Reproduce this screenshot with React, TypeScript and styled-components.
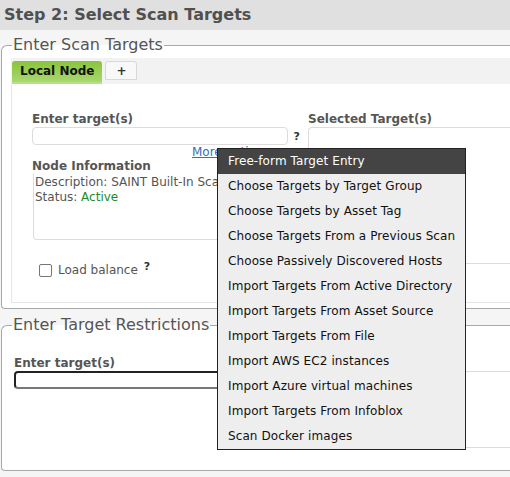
import React from "react";
import styled, { createGlobalStyle } from "styled-components";

const GlobalStyle = createGlobalStyle`
  html, body {
    margin: 0;
    padding: 0;
    background: #f5f5f5;
    overflow: hidden;
  }
  body {
    font-family: "DejaVu Sans", Verdana, sans-serif;
    font-size: 12px;
    color: #555;
  }
`;

const Page = styled.div`
  position: relative;
  width: 560px;
  height: 477px;
`;

const Header = styled.div`
  height: 30px;
  line-height: 30px;
  background: #e0e0e0;
  padding-left: 4px;
  font-size: 16px;
  font-weight: bold;
  color: #505050;
`;

const Fieldset = styled.fieldset<{ $top: number; $height: number }>`
  margin: ${(p) => p.$top}px 0 0 1px;
  padding: 3px 0 4px 9px;
  border: 1px solid #a8a8a8;
  border-radius: 6px 0 0 4px;
  border-right: none;
  height: ${(p) => p.$height}px;
  box-sizing: border-box;
  background: #fff;
`;

const Legend = styled.legend`
  padding: 0 1px;
  margin-left: 1px;
  font-size: 16px;
  line-height: 20px;
  color: #555;
`;

const TabBar = styled.div`
  display: flex;
  align-items: flex-start;
  gap: 3px;
  height: 26px;
  padding: 3px 0 0 1px;
  box-sizing: border-box;
  background: #f2f2f2;
`;

const Tab = styled.div<{ $active?: boolean }>`
  height: ${(p) => (p.$active ? 23 : 19)}px;
  line-height: ${(p) => (p.$active ? 21 : 18)}px;
  padding: 0 ${(p) => (p.$active ? 8 : 10)}px;
  font-size: 12px;
  font-weight: bold;
  box-sizing: border-box;
  border-radius: 3px 3px 0 0;
  ${(p) =>
    p.$active
      ? `
    color: #111;
    background: linear-gradient(#88c43a, #a9d770);
    border-bottom: 2px solid #b7e08a;
  `
      : `
    color: #333;
    background: #f8f8f8;
    border: 1px solid #d8d8d8;
  `}
`;

const Panel = styled.div`
  height: 219px;
  box-sizing: border-box;
  padding: 28px 0 0 20px;
  background: #fff;
  border-left: 1px solid #e6e6e6;
  border-bottom: 1px solid #e6e6e6;
`;

const Columns = styled.div<{ $gap: number }>`
  display: flex;
  gap: ${(p) => p.$gap}px;
`;

const LeftColumn = styled.div`
  display: flex;
  flex-direction: column;
  width: 268px;
`;

const RightColumn = styled.div`
  display: flex;
  flex-direction: column;
  flex: 1;
`;

const Label = styled.div`
  font-size: 12px;
  font-weight: bold;
  color: #555;
  line-height: 14px;
  margin-bottom: 1px;
`;

const InputRow = styled.div`
  display: flex;
  align-items: center;
  gap: 6px;
`;

const TextInput = styled.div<{ $focused?: boolean; $width: number }>`
  width: ${(p) => p.$width}px;
  height: 18px;
  box-sizing: border-box;
  border-radius: 4px;
  background: #fff;
  border: ${(p) => (p.$focused ? "2px solid #222" : "1px solid #dcdcdc")};
  ${(p) => p.$focused && "border-bottom-color: #777;"}
`;

const Help = styled.span<{ $raised?: boolean }>`
  font-size: 11px;
  font-weight: bold;
  color: #333;
  ${(p) => p.$raised && "align-self: flex-start; margin-top: -3px;"}
`;

const MoreLink = styled.a`
  margin: 1px 0 0 160px;
  font-size: 12px;
  color: #3b6eb2;
  text-decoration: underline;
  line-height: 13px;
`;

const InfoBox = styled.div`
  margin-left: 1px;
  height: 66px;
  box-sizing: border-box;
  padding: 1px 0 0 1px;
  border: 1px solid #dcdcdc;
  border-top: none;
  border-radius: 0 0 4px 4px;
  line-height: 15px;
  white-space: nowrap;
  overflow: hidden;
  color: #555;
`;

const Active = styled.span`
  color: #1f8a1f;
`;

const TargetBox = styled.div<{ $height: number; $top: number }>`
  margin-top: ${(p) => p.$top}px;
  height: ${(p) => p.$height}px;
  box-sizing: border-box;
  border: 1px solid #dcdcdc;
  border-right: none;
  border-radius: 4px 0 0 4px;
`;

const CheckRow = styled.label`
  display: flex;
  align-items: center;
  gap: 6px;
  margin: 23px 0 0 7px;
  color: #555;
`;

const Checkbox = styled.span`
  width: 13px;
  height: 13px;
  box-sizing: border-box;
  border: 1px solid #767676;
  border-radius: 2px;
  background: #fff;
`;

const Restrictions = styled.div`
  padding: 18px 0 0 3px;
`;

const Menu = styled.ul`
  position: absolute;
  left: 217px;
  top: 148px;
  width: 249px;
  margin: 0;
  padding: 0;
  list-style: none;
  box-sizing: border-box;
  border: 1px solid #222;
  background: #eeeeee;
`;

const MenuItem = styled.li<{ $selected?: boolean }>`
  height: 25px;
  line-height: 25px;
  padding-left: 10px;
  font-size: 12px;
  letter-spacing: 0.1px;
  white-space: nowrap;
  color: ${(p) => (p.$selected ? "#fff" : "#111")};
  background: ${(p) => (p.$selected ? "#444" : "transparent")};
`;

const menuItems = [
  "Free-form Target Entry",
  "Choose Targets by Target Group",
  "Choose Targets by Asset Tag",
  "Choose Targets From a Previous Scan",
  "Choose Passively Discovered Hosts",
  "Import Targets From Active Directory",
  "Import Targets From Asset Source",
  "Import Targets From File",
  "Import AWS EC2 instances",
  "Import Azure virtual machines",
  "Import Targets From Infoblox",
  "Scan Docker images",
];

export default function App() {
  return (
    <Page>
      <GlobalStyle />
      <Header>Step 2: Select Scan Targets</Header>

      <Fieldset $top={5} $height={274}>
        <Legend>Enter Scan Targets</Legend>
        <TabBar>
          <Tab $active>Local Node</Tab>
          <Tab>+</Tab>
        </TabBar>
        <Panel>
          <Columns $gap={8}>
            <LeftColumn>
              <Label>Enter target(s)</Label>
              <InputRow>
                <TextInput $width={256} />
                <Help>?</Help>
              </InputRow>
              <MoreLink href="#">More options</MoreLink>
              <Label>Node Information</Label>
              <InfoBox>
                Description: SAINT Built-In Scanner
                <br />
                Status: <Active>Active</Active>
              </InfoBox>
              <CheckRow>
                <Checkbox />
                Load balance
                <Help $raised>?</Help>
              </CheckRow>
            </LeftColumn>
            <RightColumn>
              <Label>Selected Target(s)</Label>
              <TargetBox $top={0} $height={137} />
            </RightColumn>
          </Columns>
        </Panel>
      </Fieldset>

      <Fieldset $top={6} $height={156}>
        <Legend>Enter Target Restrictions</Legend>
        <Restrictions>
          <Columns $gap={20}>
            <LeftColumn>
              <Label>Enter target(s)</Label>
              <TextInput $focused $width={274} />
            </LeftColumn>
            <RightColumn>
              <TargetBox $top={15} $height={77} />
            </RightColumn>
          </Columns>
        </Restrictions>
      </Fieldset>

      <Menu>
        {menuItems.map((item, i) => (
          <MenuItem key={item} $selected={i === 0}>
            {item}
          </MenuItem>
        ))}
      </Menu>
    </Page>
  );
}
